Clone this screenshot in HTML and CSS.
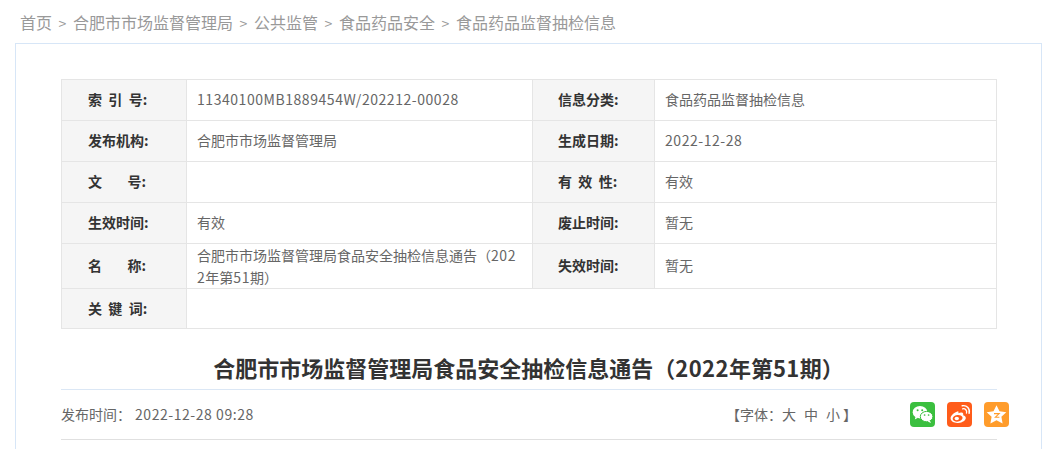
FILE: index.html
```html
<!DOCTYPE html>
<html lang="zh-CN">
<head>
<meta charset="utf-8">
<title>食品药品监督抽检信息</title>
<link rel="stylesheet" href="styles.css">
</head>
<body>
<nav class="crumbs">
  <a>首页</a><span class="sep">&gt;</span><a>合肥市市场监督管理局</a><span class="sep">&gt;</span><a>公共监管</a><span class="sep">&gt;</span><a>食品药品安全</a><span class="sep">&gt;</span><a>食品药品监督抽检信息</a>
</nav>
<main class="panel">
  <table class="info">
    <colgroup><col class="c1"><col class="c2"><col class="c3"><col class="c4"></colgroup>
    <tr class="r41"><th>索&nbsp;&nbsp;引&nbsp;&nbsp;号:</th><td><span class="num">11340100MB1889454W/202212-00028</span></td><th class="right">信息分类:</th><td>食品药品监督抽检信息</td></tr>
    <tr class="r41"><th>发布机构:</th><td>合肥市市场监督管理局</td><th class="right">生成日期:</th><td><span class="num">2022-12-28</span></td></tr>
    <tr class="r41"><th>文&nbsp;&nbsp;&nbsp;&nbsp;&nbsp;&nbsp;&nbsp;&nbsp;号:</th><td></td><th class="right">有&nbsp;&nbsp;效&nbsp;&nbsp;性:</th><td>有效</td></tr>
    <tr class="r41"><th>生效时间:</th><td>有效</td><th class="right">废止时间:</th><td>暂无</td></tr>
    <tr class="r45"><th>名&nbsp;&nbsp;&nbsp;&nbsp;&nbsp;&nbsp;&nbsp;&nbsp;称:</th><td class="name">合肥市市场监督管理局食品安全抽检信息通告（<span class="num">202</span><span class="num">2</span>年第<span class="num">51</span>期）</td><th class="right">失效时间:</th><td>暂无</td></tr>
    <tr class="r40"><th>关&nbsp;&nbsp;键&nbsp;&nbsp;词:</th><td colspan="3"></td></tr>
  </table>
  <h1 class="title">合肥市市场监督管理局食品安全抽检信息通告（<span class="title-num">2022</span>年第<span class="title-num">51</span>期）</h1>
  <div class="meta">
    <div class="time"><span class="time-label">发布时间：</span><span class="num">2022-12-28 09:28</span></div>
    <div class="font-size">【字体：<span class="fs">大</span><span class="fs">中</span><span class="fs-last">小</span>】</div>
    <div class="share">
      <a class="icon wechat" aria-label="微信"><svg viewBox="0 0 25 25" width="25" height="25"><ellipse cx="10" cy="10.2" rx="7.3" ry="6.2" fill="#fff"/><path d="M5.6 14.5l-.8 3 3.2-1.8z" fill="#fff"/><ellipse cx="16.6" cy="14.6" rx="6.3" ry="5.2" fill="#fff" stroke="#3bbf3f" stroke-width="1"/><path d="M19.8 18.4l1.2 2.6-3.4-1.6z" fill="#fff"/><circle cx="7.6" cy="8.2" r="1" fill="#3bbf3f"/><circle cx="12.2" cy="8.2" r="1" fill="#3bbf3f"/><circle cx="14.6" cy="13" r=".85" fill="#3bbf3f"/><circle cx="18.6" cy="13" r=".85" fill="#3bbf3f"/></svg></a>
      <a class="icon weibo" aria-label="微博"><svg viewBox="0 0 25 25" width="25" height="25"><path d="M10.5 9.5C6.6 10.6 3.4 14 3.6 16.6c.2 2.9 3.6 4.6 7.6 4.3 4.3-.3 7.8-2.6 7.6-5.2-.1-1.7-1.8-2.2-2.7-2.5.5-1.3.2-2.5-1.6-2.7-1.1-.1-2.3.4-3.1.7.3-1.2.1-2.2-.9-1.7z" fill="#fff"/><ellipse cx="10.6" cy="16.3" rx="5" ry="3.3" fill="#ff5c1a" transform="rotate(-8 10.6 16.3)"/><ellipse cx="9.8" cy="16.5" rx="2.2" ry="1.8" fill="#fff"/><path d="M15.6 6.8c2.6-.6 4.7 1.6 3.9 4.3" fill="none" stroke="#fff" stroke-width="1.3" stroke-linecap="round"/><path d="M15.2 3.8c4.6-1 8.2 3 6.9 7.6" fill="none" stroke="#fff" stroke-width="1.4" stroke-linecap="round"/></svg></a>
      <a class="icon qzone" aria-label="QQ空间"><svg viewBox="0 0 25 25" width="25" height="25"><path d="M12.5 3.2l3 6.1 6.8.9-4.9 4.6 1.2 6.7-6.1-3.3-6.1 3.3 1.2-6.7-4.9-4.6 6.8-.9z" fill="#fff"/><path d="M10 11.6h5.2l-3.8 3.6h4" fill="none" stroke="#ff9c2b" stroke-width="1.1"/></svg></a>
    </div>
  </div>
</main>
</body>
</html>
```
FILE: styles.css
```css
html, body {
  margin: 0;
  padding: 0;
  height: 449px;
  overflow: hidden;
  background: #fff;
}
body {
  font-family: "Noto Sans CJK SC", "Noto Sans", sans-serif;
  font-size: 14px;
  color: #666;
}
.crumbs {
  height: 43px;
  padding-left: 20px;
  font-size: 16px;
  line-height: 45px;
  color: #999;
  white-space: nowrap;
}
.sep {
  margin: 0 6.6px;
  font-size: 14px;
}
.panel {
  box-sizing: border-box;
  width: 1027px;
  height: 500px;
  margin-left: 15px;
  padding: 35px 45px 0;
  border: 1px solid #d7e6f7;
}
.info {
  width: 935px;
  table-layout: fixed;
  border-collapse: collapse;
}
.c1 { width: 125px; }
.c2 { width: 346px; }
.c3 { width: 122px; }
.c4 { width: 342px; }
.info th, .info td {
  border: 1px solid #e5e5e5;
  line-height: 22px;
  padding: 0 0 2px;
}
.info th {
  background: #f5f5f5;
  color: #333;
  font-weight: 700;
  text-align: left;
  padding-left: 26px;
}
.info th.right { padding-left: 25px; }
.info td {
  padding: 0 10px 2px;
  word-break: break-all;
}
.info td.name { padding-bottom: 0; }
.num { letter-spacing: .55px; }
.title-num { letter-spacing: .4px; }
.r41 { height: 41px; }
.r45 { height: 45px; }
.r40 { height: 40px; }
.title {
  margin: 0;
  height: 60px;
  font-size: 22px;
  line-height: 76px;
  font-weight: 700;
  color: #333;
  text-align: center;
  white-space: nowrap;
  width: 935px;
}
.meta {
  display: flex;
  align-items: center;
  width: 936px;
  height: 49px;
  border-top: 1px solid #dbe7f5;
  border-bottom: 1px solid #e0e0e0;
}
.time, .font-size { padding-bottom: 2px; }
.time-label { margin-right: 4px; }
.font-size {
  margin-left: auto;
  display: flex;
  color: #666;
}
.fs { margin-right: 8px; }
.fs-last { margin-right: 3px; }
.share {
  display: flex;
  gap: 12px;
  margin-left: 53px;
  margin-right: -12px;
}
.icon {
  display: block;
  width: 25px;
  height: 25px;
  border-radius: 4px;
}
.icon svg { display: block; }
.wechat { background: #3bbf3f; }
.weibo { background: #ff5c1a; }
.qzone { background: #ff9c2b; }
```
